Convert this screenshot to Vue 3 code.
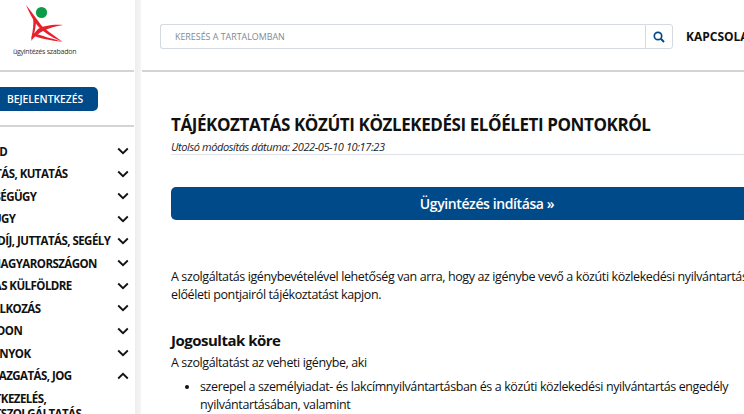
<script setup>
const menu = [
  { label: 'Család' },
  { label: 'Oktatás, kutatás' },
  { label: 'Egészségügy' },
  { label: 'Adóügy' },
  { label: 'Nyugdíj, juttatás, segély' },
  { label: 'Élet Magyarországon' },
  { label: 'Utazás külföldre' },
  { label: 'Vállalkozás' },
  { label: 'Tulajdon' },
  { label: 'Okmányok' },
  { label: 'Közigazgatás, jog', open: true }
]
</script>

<template>
  <div class="page">
    <aside class="sidebar">
      <div class="logo">
        <svg class="logo-mark" viewBox="0 0 38 38" width="38" height="38">
          <circle cx="15.5" cy="7.5" r="5.6" fill="#0d9b4a" />
          <path d="M0 0 C4 9 7 15 11 20 C15 25 24 32 37 37 C27 30 20 25 15 20 C10 13 5 6 0 0 Z" fill="#e8202e" />
          <path d="M37 20 C27 19 17 21 12 24 C9 27 6 31 5 36 C9 31 13 28 17 26 C23 23 30 21 37 20 Z" fill="#e8202e" />
          <path d="M7 12 C8 18 7 26 5 34 L7 33 C9 26 10 20 10 16 Z" fill="#e8202e" />
          <path d="M6 30 C14 34 25 35 36 37 C26 33 15 31 8 28 Z" fill="#e8202e" />
        </svg>
        <div class="logo-text">ügyintézés szabadon</div>
      </div>
      <div class="login">
        <button class="login-btn" type="button">BEJELENTKEZÉS</button>
      </div>
      <nav class="menu">
        <div v-for="item in menu" :key="item.label" class="menu-row">
          <span class="menu-label">{{ item.label }}</span>
          <svg class="chevron" :class="{ open: item.open }" viewBox="0 0 12 8" width="12" height="8">
            <path d="M1.2 1.5 L6 6.2 L10.8 1.5" fill="none" stroke="#111" stroke-width="1.8" />
          </svg>
        </div>
        <div class="menu-sub">Adatkezelés,<br />Adatszolgáltatás</div>
      </nav>
    </aside>

    <div class="gutter"></div>

    <main class="main">
      <header class="topbar">
        <div class="search">
          <input class="search-input" type="text" placeholder="KERESÉS A TARTALOMBAN" />
          <button class="search-btn" type="button">
            <svg viewBox="0 0 12 12" width="12" height="12">
              <circle cx="5" cy="5" r="3.7" fill="none" stroke="#004a8a" stroke-width="1.7" />
              <path d="M7.8 7.8 L11 11" stroke="#004a8a" stroke-width="2" />
            </svg>
          </button>
        </div>
        <a class="contact">KAPCSOLAT</a>
      </header>

      <article class="content">
        <h1 class="title">TÁJÉKOZTATÁS KÖZÚTI KÖZLEKEDÉSI ELŐÉLETI PONTOKRÓL</h1>
        <p class="modified">Utolsó módosítás dátuma: 2022-05-10 10:17:23</p>
        <button class="start-btn" type="button">Ügyintézés indítása »</button>
        <p class="lead">A szolgáltatás igénybevételével lehetőség van arra, hogy az igénybe vevő a közúti közlekedési nyilvántartásban szereplő<br />előéleti pontjairól tájékoztatást kapjon.</p>
        <h2 class="subtitle">Jogosultak köre</h2>
        <p class="intro">A szolgáltatást az veheti igénybe, aki</p>
        <ul class="list">
          <li>szerepel a személyiadat- és lakcímnyilvántartásban és a közúti közlekedési nyilvántartás engedély<br />nyilvántartásában, valamint</li>
        </ul>
      </article>
    </main>
  </div>
</template>

<style>
html,
body {
  margin: 0;
  overflow: hidden;
  background: #fff;
}
</style>

<style scoped>
.page {
  display: flex;
  width: 744px;
  height: 414px;
  overflow: hidden;
  font-family: "Open Sans", "Noto Sans", sans-serif;
  color: #111;
  background: #fff;
}

.sidebar {
  flex: 0 0 135px;
  width: 135px;
  overflow: hidden;
}

.logo {
  width: 134px;
  height: 70px;
  border-bottom: 2px solid #d4d4d4;
  position: relative;
}

.logo-mark {
  position: absolute;
  left: 26px;
  top: 5px;
}

.logo-text {
  position: absolute;
  left: 13px;
  top: 47px;
  font-size: 7px;
  letter-spacing: -0.25px;
  line-height: 10px;
  color: #333;
  white-space: nowrap;
}

.login {
  width: 134px;
  padding-top: 15px;
  height: 38px;
  border-bottom: 2px solid #d4d4d4;
}

.login-btn {
  display: block;
  width: 106px;
  height: 24px;
  margin-left: -8px;
  padding: 0;
  border: none;
  border-radius: 5px;
  background: #004a8a;
  color: #fff;
  font: 600 10.3px "Open Sans", sans-serif;
}

.menu {
  padding-top: 13px;
}

.menu-row {
  display: flex;
  align-items: center;
  height: 22.45px;
  margin-left: -34px;
  width: 163px;
}

.menu-label {
  flex: 1;
  font-size: 11.5px;
  letter-spacing: -0.55px;
  font-weight: 700;
  text-transform: uppercase;
  white-space: nowrap;
}

/* labels whose start is off screen, nudged to line up with the visible tail */
.menu-row:nth-child(3) .menu-label {
  margin-left: -3px;
}

.menu-row:nth-child(4) .menu-label {
  padding-left: 3px;
}

.menu-row:nth-child(6) .menu-label {
  margin-left: -2px;
}

.chevron {
  flex: none;
}

.chevron.open {
  transform: rotate(180deg);
}

.menu-sub {
  margin: 4px 0 0 -28px;
  font-size: 11.5px;
  letter-spacing: -0.55px;
  line-height: 15px;
  font-weight: 700;
  text-transform: uppercase;
  white-space: nowrap;
}

.gutter {
  flex: 0 0 7px;
  background: linear-gradient(to right, #eee, #f3f3f3 70%, #fff);
}

.main {
  flex: 0 0 auto;
  width: 680px;
}

.topbar {
  display: flex;
  align-items: center;
  height: 72px;
  box-sizing: border-box;
  padding: 3px 0 0 18px;
  border-bottom: 2px solid #d4d4d4;
}

.search {
  display: flex;
  width: 513px;
  height: 25px;
}

.search-input {
  flex: 1;
  min-width: 0;
  padding: 0 14px;
  border: 1px solid #d5dae0;
  border-right: none;
  border-radius: 3px 0 0 3px;
  font: 8.9px "Open Sans", sans-serif;
  outline: none;
}

.search-input::placeholder {
  color: #7f8a94;
  opacity: 1;
}

.search-btn {
  display: flex;
  align-items: center;
  justify-content: center;
  width: 28px;
  padding: 0;
  border: 1px solid #d5dae0;
  border-radius: 0 3px 3px 0;
  background: #fff;
}

.contact {
  margin-left: 13px;
  font-size: 12px;
  font-weight: 700;
  white-space: nowrap;
}

.content {
  width: 632px;
  margin-left: 29px;
  padding-top: 41px;
}

.title {
  margin: 0;
  font-size: 17px;
  letter-spacing: -0.41px;
  line-height: 24px;
  font-weight: 700;
  white-space: nowrap;
}

.modified {
  margin: 3px 0 0;
  padding-bottom: 1px;
  border-bottom: 1px solid #dde3e8;
  font-size: 11px;
  letter-spacing: -0.4px;
  line-height: 13px;
  font-style: italic;
  color: #222;
}

.start-btn {
  display: block;
  width: 632px;
  height: 33px;
  margin-top: 32px;
  border: none;
  border-radius: 5px;
  background: #004a8a;
  color: #fff;
  font: 600 14px "Open Sans", sans-serif;
  letter-spacing: -0.4px;
}

.lead {
  margin: 48px 0 0;
  font-size: 12.5px;
  letter-spacing: -0.39px;
  line-height: 18px;
  white-space: nowrap;
}

.subtitle {
  margin: 26px 0 0;
  font-size: 15px;
  letter-spacing: -0.5px;
  line-height: 20px;
  font-weight: 700;
}

.intro {
  margin: 4px 0 0;
  font-size: 12.5px;
  letter-spacing: -0.39px;
  line-height: 18px;
}

.list {
  margin: 6px 0 0;
  padding-left: 29px;
  font-size: 12.5px;
  letter-spacing: -0.39px;
  line-height: 18px;
  white-space: nowrap;
}
</style>
